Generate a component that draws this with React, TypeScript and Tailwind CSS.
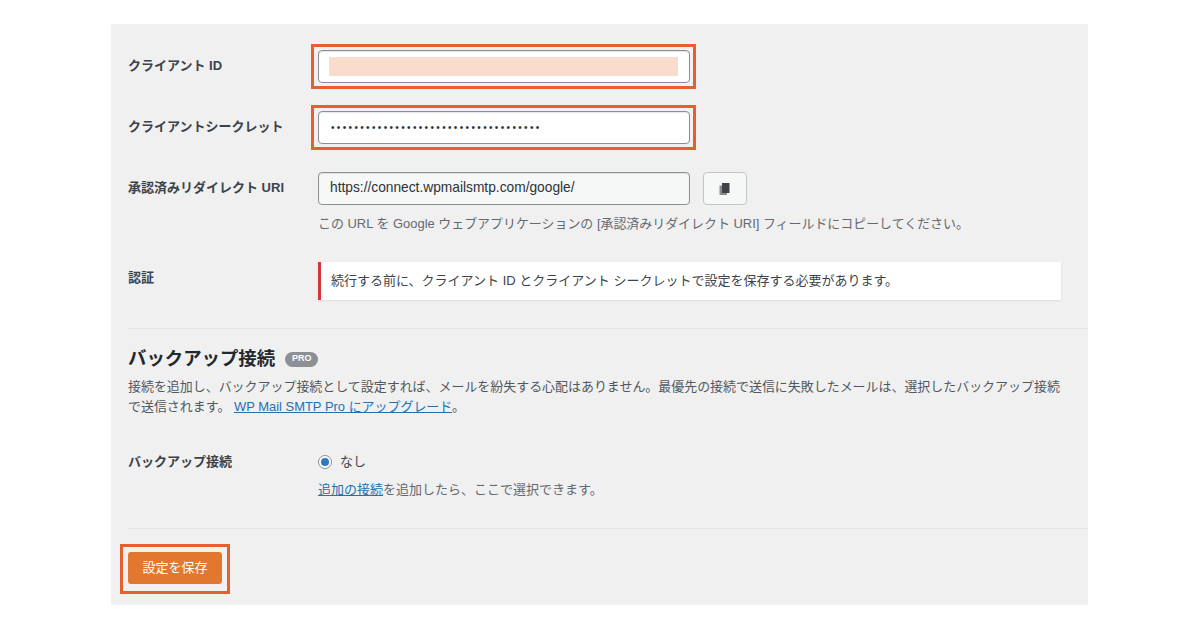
const font = { fontFamily: '"Liberation Sans", "Noto Sans CJK JP", sans-serif' };

function Label({ children, top }: { children: React.ReactNode; top: string }) {
  return <div className={`w-[190px] shrink-0 text-[13px] font-semibold leading-5 text-[#3c434a] ${top}`}>{children}</div>;
}

function CopyIcon() {
  return (
    <svg width="14" height="14" viewBox="0 0 14 14" aria-hidden="true">
      <rect x="1.5" y="3.5" width="7.5" height="9.5" fill="#8a8c8f" />
      <rect x="4" y="1" width="7.5" height="10" fill="#3f4348" />
    </svg>
  );
}

export default function App() {
  return (
    <div className="h-[630px] w-[1200px] overflow-hidden bg-white pt-[24px] pl-[111px]" style={font}>
      <div className="h-[581px] w-[977px] bg-[#f0f0f1] pt-[20px] pl-[17px]">
        <div className="flex">
          <Label top="pt-[12px]">クライアント ID</Label>
          <div className="-ml-[7px] h-[45px] w-[385px] border-[3px] border-[#e4602f] py-[3px] pr-[3px] pl-[4px]">
            <div className="flex h-[33px] w-[372px] items-center rounded border border-[#8c8f94] bg-white pl-[10px] shadow-[inset_0_1px_1px_rgba(0,0,0,0.1)]">
              <div className="h-[19px] w-[349px] bg-[#fadccc]" />
            </div>
          </div>
        </div>

        <div className="mt-[16px] flex">
          <Label top="pt-[12px]">クライアントシークレット</Label>
          <div className="-ml-[7px] h-[45px] w-[385px] border-[3px] border-[#e4602f] py-[3px] pr-[3px] pl-[4px]">
            <div className="flex h-[33px] w-[372px] items-center overflow-hidden rounded border border-[#8c8f94] bg-white pl-[12px] text-[10px] tracking-[2.35px] text-[#2c3338] shadow-[inset_0_1px_1px_rgba(0,0,0,0.1)]">
              ••••••••••••••••••••••••••••••••••••
            </div>
          </div>
        </div>

        <div className="mt-[22px] flex">
          <Label top="pt-[6px]">承認済みリダイレクト URI</Label>
          <div>
            <div className="flex gap-[13px]">
              <div className="flex h-[33px] w-[372px] items-center rounded border border-[#8c8f94] bg-[#f6f7f7] pl-[11px] text-[13.75px] text-[#2c3338] shadow-[inset_0_1px_1px_rgba(0,0,0,0.1)]">
                https://connect.wpmailsmtp.com/google/
              </div>
              <button className="flex h-[33px] w-[44px] items-center justify-center rounded border border-[#c3c4c7] bg-[#f6f7f7]">
                <CopyIcon />
              </button>
            </div>
            <p className="mt-[9px] text-[12.95px] leading-5 text-[#646970]">
              この URL を Google ウェブアプリケーションの [承認済みリダイレクト URI] フィールドにコピーしてください。
            </p>
          </div>
        </div>

        <div className="mt-[28px] flex">
          <Label top="pt-[6px]">認証</Label>
          <div className="flex h-[38px] w-[743px] items-center border-l-[3px] border-[#d63638] bg-white pl-[10px] text-[13px] text-[#3c434a] shadow-[0_1px_2px_rgba(0,0,0,0.08)]">
            続行する前に、クライアント ID とクライアント シークレットで設定を保存する必要があります。
          </div>
        </div>

        <div className="mt-[28px] h-px bg-[#e4e4e5]" />

        <div className="mt-[18px] flex items-center gap-[10px]">
          <h2 className="text-[18.4px] leading-6 font-semibold text-[#23282d]">バックアップ接続</h2>
          <span className="flex h-[15px] w-[33px] items-center justify-center rounded-full bg-[#8c8f94] text-[9px] font-bold text-white">PRO</span>
        </div>
        <p className="mt-[6px] w-[940px] text-[12.96px] leading-5 text-[#50575e]">
          接続を追加し、バックアップ接続として設定すれば、メールを紛失する心配はありません。最優先の接続で送信に失敗したメールは、選択したバックアップ接続で送信されます。{' '}
          <a className="text-[#2271b1] underline">WP Mail SMTP Pro にアップグレード</a>。
        </p>

        <div className="mt-[35px] flex">
          <Label top="pt-0">バックアップ接続</Label>
          <div>
            <div className="flex items-center gap-[8px] text-[13px] leading-5 text-[#3c434a]">
              <span className="flex h-[14px] w-[14px] items-center justify-center rounded-full border border-[#8c8f94] bg-white">
                <span className="h-[8px] w-[8px] rounded-full bg-[#2f7ac3]" />
              </span>
              なし
            </div>
            <p className="mt-[8px] text-[13px] leading-5 text-[#646970]">
              <a className="text-[#2271b1] underline">追加の接続</a>を追加したら、ここで選択できます。
            </p>
          </div>
        </div>

        <div className="mt-[28px] h-px bg-[#e4e4e5]" />

        <div className="mt-[15px] -ml-[8px] h-[50px] w-[110px] border-[3px] border-[#e4602f] py-[5px] pl-[5px]">
          <button className="h-[32px] w-[94px] rounded-[3px] bg-[#e27730] text-[13px] text-white">設定を保存</button>
        </div>
      </div>
    </div>
  );
}
